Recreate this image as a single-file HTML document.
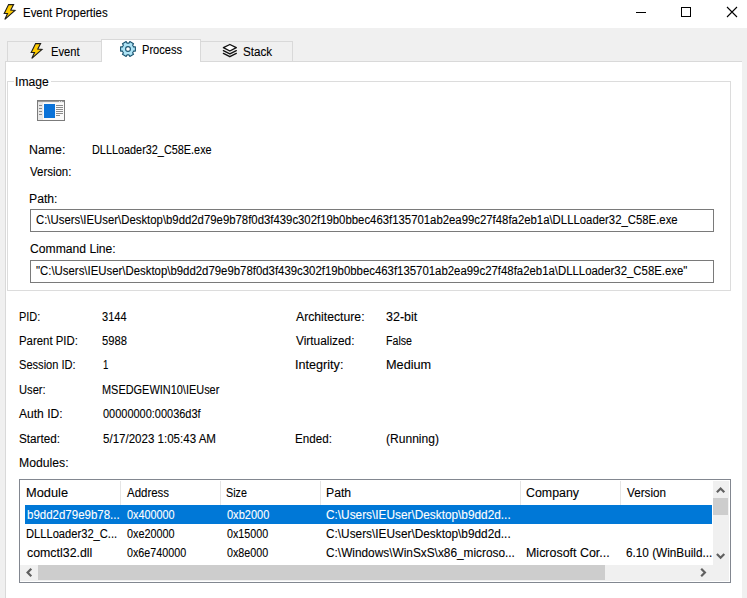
<!DOCTYPE html>
<html><head><meta charset="utf-8">
<style>
html,body{margin:0;padding:0}
body{width:747px;height:598px;position:relative;overflow:hidden;background:#f0f0f0;font-family:"Liberation Sans",sans-serif;color:#000}
.a{position:absolute}
.t{position:absolute;font-size:12px;line-height:14px;white-space:pre;transform-origin:0 0;-webkit-text-stroke:0.1px currentColor}
.bx{position:absolute;box-sizing:border-box}
</style></head><body>

<!-- title bar -->
<div class="a" style="left:0;top:0;width:747px;height:28px;background:#fff"></div>
<svg class="a" style="left:0;top:0" width="20" height="24" viewBox="0 0 20 24">
<path d="M8.6,4.6 L13.6,4.6 L10.8,10 L15.0,10.4 L4.8,19.4 L7.5,13.5 L4.2,13.5 Z" fill="#ffcc00" stroke="#1c1c1c" stroke-width="1.1" stroke-linejoin="miter"/>
</svg>
<div class="a" style="left:636px;top:12px;width:10px;height:1px;background:#000"></div>
<div class="bx" style="left:681px;top:7px;width:10px;height:10px;border:1px solid #000"></div>
<svg class="a" style="left:726px;top:6px" width="12" height="12" viewBox="0 0 12 12">
<path d="M1,1 L11,11 M11,1 L1,11" stroke="#000" stroke-width="1.1"/>
</svg>

<!-- tabs -->
<div class="bx" style="left:7px;top:41px;width:95px;height:21px;border:1px solid #d9d9d9;background:#f0f0f0"></div>
<div class="bx" style="left:200px;top:41px;width:93px;height:21px;border:1px solid #d9d9d9;background:#f0f0f0"></div>
<!-- panel -->
<div class="bx" style="left:5px;top:61px;width:737px;height:540px;border:1px solid #d9d9d9;border-right:none;border-bottom:none;background:#fff"></div>
<div class="bx" style="left:101px;top:39px;width:100px;height:23px;border:1px solid #d9d9d9;border-bottom:none;background:#fff"></div>

<svg class="a" style="left:27px;top:39px" width="20" height="24" viewBox="0 0 20 24">
<path d="M8.6,4.6 L13.6,4.6 L10.8,10 L15.0,10.4 L4.8,19.4 L7.5,13.5 L4.2,13.5 Z" fill="#ffcc00" stroke="#1c1c1c" stroke-width="1.1"/>
</svg>

<svg class="a" style="left:120px;top:41px" width="16" height="16" viewBox="0 0 16 16">
<path d="M13.11,5.05 L13.51,5.89 L15.40,5.88 L15.40,10.12 L13.51,10.11 L13.11,10.95 L12.59,11.71 L13.54,13.35 L9.86,15.47 L8.92,13.83 L8.00,13.90 L7.08,13.83 L6.14,15.47 L2.46,13.35 L3.41,11.71 L2.89,10.95 L2.49,10.11 L0.60,10.12 L0.60,5.88 L2.49,5.89 L2.89,5.05 L3.41,4.29 L2.46,2.65 L6.14,0.53 L7.08,2.17 L8.00,2.10 L8.92,2.17 L9.86,0.53 L13.54,2.65 L12.59,4.29 Z" fill="#aee4f6" stroke="#1a5470" stroke-width="1.1" stroke-linejoin="round"/>
<circle cx="8" cy="8" r="2.4" fill="#fff" stroke="#1a5470" stroke-width="1.1"/>
</svg>

<svg class="a" style="left:219px;top:40px" width="22" height="22" viewBox="0 0 22 22">
<path d="M4.4,13.4 L10.85,16.7 L17.3,13.4" fill="none" stroke="#111" stroke-width="1.35" stroke-linejoin="round" stroke-linecap="round"/>
<path d="M4.4,10.6 L10.85,13.8 L17.3,10.6" fill="none" stroke="#111" stroke-width="1.35" stroke-linejoin="round" stroke-linecap="round"/>
<path d="M10.85,4.5 L17.3,7.7 L10.85,11 L4.4,7.7 Z" fill="#fff" stroke="#111" stroke-width="1.35" stroke-linejoin="round"/>
</svg>

<!-- group box -->
<div class="bx" style="left:7px;top:81px;width:724px;height:210px;border:1px solid #dcdcdc"></div>
<div class="a" style="left:14px;top:78px;width:37px;height:8px;background:#fff"></div>

<!-- image icon -->
<svg class="a" style="left:37px;top:100px" width="28" height="21" viewBox="0 0 28 21">
<rect x="0.5" y="0.5" width="27" height="20" fill="#f4f4f4" stroke="#7b7b7b"/>
<rect x="1" y="1" width="26" height="1.3" fill="#9a9a9a"/><rect x="22" y="1" width="1" height="1" fill="#ddd"/><rect x="24" y="1" width="1" height="1" fill="#ddd"/>
<rect x="1" y="2.3" width="5" height="17.7" fill="#e8e8e8"/>
<rect x="6" y="2.3" width="21" height="17.7" fill="#fafafa"/>
<rect x="7" y="4" width="11" height="14" fill="#0a72d8"/>
<rect x="2" y="5" width="3" height="1" fill="#8a8a8a"/>
<rect x="2" y="8" width="3" height="1" fill="#8a8a8a"/>
<rect x="2" y="11" width="3" height="1" fill="#8a8a8a"/>
<rect x="2" y="14" width="3" height="1" fill="#8a8a8a"/>
<rect x="19" y="5" width="7" height="1" fill="#8a8a8a"/>
<rect x="19" y="7" width="7" height="1" fill="#8a8a8a"/>
<rect x="19" y="9" width="7" height="1" fill="#8a8a8a"/>
<rect x="19" y="11" width="7" height="1" fill="#8a8a8a"/>
<rect x="19" y="13" width="7" height="1" fill="#8a8a8a"/>
<rect x="19" y="15" width="4" height="1" fill="#8a8a8a"/>
</svg>

<div class="bx" style="left:30px;top:209px;width:684px;height:23px;border:1px solid #7a7a7a;background:#fff"></div>
<div class="bx" style="left:30px;top:260px;width:684px;height:23px;border:1px solid #7a7a7a;background:#fff"></div>

<!-- details -->

<!-- list -->
<div class="bx" style="left:19px;top:479px;width:712px;height:104px;border:1px solid #828790;background:#fff"></div>
<div class="a" style="left:120px;top:481px;width:1px;height:24px;background:#e5e5e5"></div>
<div class="a" style="left:220px;top:481px;width:1px;height:24px;background:#e5e5e5"></div>
<div class="a" style="left:320px;top:481px;width:1px;height:24px;background:#e5e5e5"></div>
<div class="a" style="left:520px;top:481px;width:1px;height:24px;background:#e5e5e5"></div>
<div class="a" style="left:620px;top:481px;width:1px;height:24px;background:#e5e5e5"></div>

<div class="a" style="left:25px;top:505px;width:687px;height:19px;background:#0078d7"></div>

<!-- v scrollbar -->
<div class="a" style="left:713px;top:481px;width:16px;height:84px;background:#f0f0f0"></div>
<div class="a" style="left:713px;top:498px;width:15px;height:17px;background:#cdcdcd"></div>
<svg class="a" style="left:713px;top:481px" width="16" height="84" viewBox="0 0 16 84">
<path d="M3.9,11.2 L7.6,7.5 L11.3,11.2" fill="none" stroke="#606060" stroke-width="2.2"/>
<path d="M3.9,73 L7.6,76.7 L11.3,73" fill="none" stroke="#606060" stroke-width="2.2"/>
</svg>
<!-- h scrollbar -->
<div class="a" style="left:20px;top:565px;width:709px;height:16px;background:#f0f0f0"></div>
<div class="a" style="left:38px;top:565px;width:567px;height:15px;background:#cdcdcd"></div>
<svg class="a" style="left:20px;top:565px" width="693" height="16" viewBox="0 0 693 16">
<path d="M11.3,3.8 L7.6,7.5 L11.3,11.2" fill="none" stroke="#606060" stroke-width="2.2"/>
<path d="M681.2,3.8 L684.9,7.5 L681.2,11.2" fill="none" stroke="#606060" stroke-width="2.2"/>
</svg>

<div class="t" style="left:23.24px;top:6px;transform:scaleX(0.9541)">Event Properties</div>
<div class="t" style="left:51.12px;top:45px;transform:scaleX(0.9333)">Event</div>
<div class="t" style="left:142.15px;top:43px;transform:scaleX(0.9242)">Process</div>
<div class="t" style="left:243.15px;top:45px;transform:scaleX(0.9688)">Stack</div>
<div class="t" style="left:14.95px;top:75px;transform:scaleX(1.0130)">Image</div>
<div class="t" style="left:28.95px;top:143px;transform:scaleX(1.0293)">Name:</div>
<div class="t" style="left:91.99px;top:143px;transform:scaleX(0.9057)">DLLLoader32_C58E.exe</div>
<div class="t" style="left:29.82px;top:165px;transform:scaleX(0.9543)">Version:</div>
<div class="t" style="left:28.79px;top:192px;transform:scaleX(1.0155)">Path:</div>
<div class="t" style="left:35.70px;top:213px;transform:scaleX(0.9466)">C:\Users\IEUser\Desktop\b9dd2d79e9b78f0d3f439c302f19b0bbec463f135701ab2ea99c27f48fa2eb1a\DLLLoader32_C58E.exe</div>
<div class="t" style="left:29.99px;top:242px;transform:scaleX(1.0120)">Command Line:</div>
<div class="t" style="left:35.52px;top:264px;transform:scaleX(0.9490)">"C:\Users\IEUser\Desktop\b9dd2d79e9b78f0d3f439c302f19b0bbec463f135701ab2ea99c27f48fa2eb1a\DLLLoader32_C58E.exe"</div>
<div class="t" style="left:18.83px;top:310px;transform:scaleX(0.9116)">PID:</div>
<div class="t" style="left:102.30px;top:310px;transform:scaleX(0.9203)">3144</div>
<div class="t" style="left:296.46px;top:310px;transform:scaleX(1.0175)">Architecture:</div>
<div class="t" style="left:385.70px;top:310px;transform:scaleX(1.0427)">32-bit</div>
<div class="t" style="left:18.62px;top:334px;transform:scaleX(0.9496)">Parent PID:</div>
<div class="t" style="left:102.06px;top:334px;transform:scaleX(0.9366)">5988</div>
<div class="t" style="left:295.85px;top:334px;transform:scaleX(0.9894)">Virtualized:</div>
<div class="t" style="left:385.85px;top:334px;transform:scaleX(0.8877)">False</div>
<div class="t" style="left:18.53px;top:358px;transform:scaleX(0.9232)">Session ID:</div>
<div class="t" style="left:103.00px;top:358px;transform:scaleX(0.8000)">1</div>
<div class="t" style="left:294.81px;top:358px;transform:scaleX(1.0525)">Integrity:</div>
<div class="t" style="left:386.26px;top:358px;transform:scaleX(1.0592)">Medium</div>
<div class="t" style="left:18.70px;top:383px;transform:scaleX(0.9302)">User:</div>
<div class="t" style="left:102.16px;top:383px;transform:scaleX(0.9117)">MSEDGEWIN10\IEUser</div>
<div class="t" style="left:19.28px;top:407px;transform:scaleX(1.0062)">Auth ID:</div>
<div class="t" style="left:103.37px;top:407px;transform:scaleX(0.9143)">00000000:00036d3f</div>
<div class="t" style="left:18.59px;top:432px;transform:scaleX(0.9784)">Started:</div>
<div class="t" style="left:102.85px;top:432px;transform:scaleX(0.9619)">5/17/2023 1:05:43 AM</div>
<div class="t" style="left:295.09px;top:432px;transform:scaleX(0.9696)">Ended:</div>
<div class="t" style="left:386.05px;top:432px;transform:scaleX(1.0052)">(Running)</div>
<div class="t" style="left:18.98px;top:456px;transform:scaleX(1.0172)">Modules:</div>
<div class="t" style="left:25.91px;top:486px;transform:scaleX(1.0674)">Module</div>
<div class="t" style="left:127.14px;top:486px;transform:scaleX(0.9559)">Address</div>
<div class="t" style="left:225.68px;top:486px;transform:scaleX(0.8986)">Size</div>
<div class="t" style="left:326.01px;top:486px;transform:scaleX(1.0194)">Path</div>
<div class="t" style="left:526.22px;top:486px;transform:scaleX(1.0322)">Company</div>
<div class="t" style="left:626.81px;top:486px;transform:scaleX(0.9736)">Version</div>
<div class="t" style="left:26.64px;top:508px;color:#fff;transform:scaleX(0.9579)">b9dd2d79e9b78...</div>
<div class="t" style="left:127.06px;top:508px;color:#fff;transform:scaleX(0.9040)">0x400000</div>
<div class="t" style="left:227.40px;top:508px;color:#fff;transform:scaleX(0.9176)">0xb2000</div>
<div class="t" style="left:325.91px;top:508px;color:#fff;transform:scaleX(0.9854)">C:\Users\IEUser\Desktop\b9dd2d...</div>
<div class="t" style="left:26.05px;top:527px;transform:scaleX(0.9292)">DLLLoader32_C...</div>
<div class="t" style="left:127.06px;top:527px;transform:scaleX(0.9040)">0xe20000</div>
<div class="t" style="left:227.40px;top:527px;transform:scaleX(0.8959)">0x15000</div>
<div class="t" style="left:325.91px;top:527px;transform:scaleX(0.9854)">C:\Users\IEUser\Desktop\b9dd2d...</div>
<div class="t" style="left:27.11px;top:546px;transform:scaleX(1.0310)">comctl32.dll</div>
<div class="t" style="left:127.05px;top:546px;transform:scaleX(0.8948)">0x6e740000</div>
<div class="t" style="left:227.40px;top:546px;transform:scaleX(0.8959)">0x8e000</div>
<div class="t" style="left:326.28px;top:546px;transform:scaleX(0.9871)">C:\Windows\WinSxS\x86_microso...</div>
<div class="t" style="left:525.95px;top:546px;transform:scaleX(1.0371)">Microsoft Cor...</div>
<div class="t" style="left:626.39px;top:546px;transform:scaleX(0.9798)">6.10 (WinBuild...</div>
</body></html>
